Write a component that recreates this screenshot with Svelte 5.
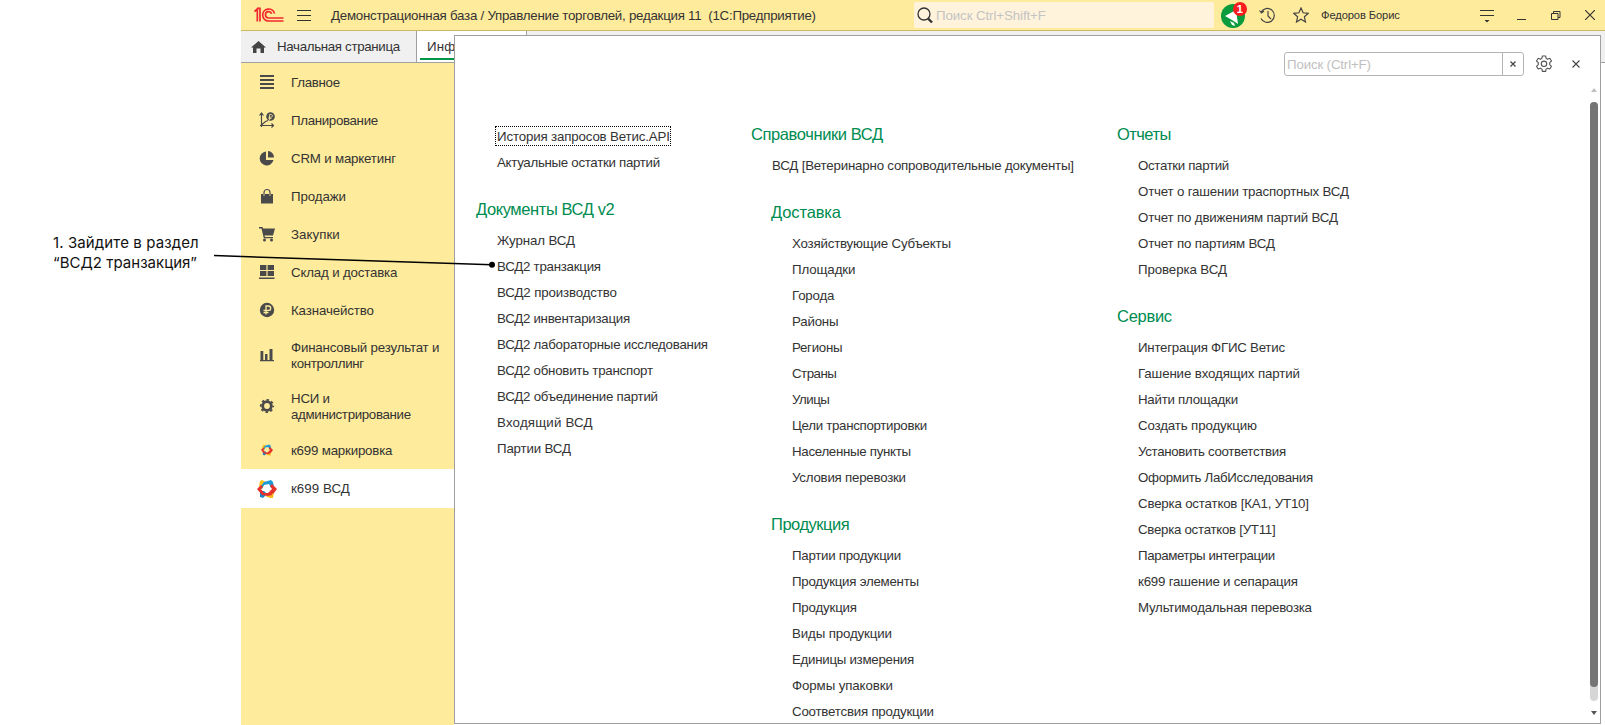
<script>
  // Spreads a label's letters so that it takes exactly the given width.
  function fit(node, width) {
    const chars = node.textContent.length;
    const natural = node.getBoundingClientRect().width;
    node.style.letterSpacing = (width + 0.8 - natural) / chars + 'px';
  }

  const sections = [
    { icon: 'lines', lines: [['Главное', 48]] },
    { icon: 'plan', lines: [['Планирование', 86]] },
    { icon: 'pie', lines: [['CRM и маркетинг', 104]] },
    { icon: 'bag', lines: [['Продажи', 54]] },
    { icon: 'cart', lines: [['Закупки', 48]] },
    { icon: 'store', lines: [['Склад и доставка', 105.5]] },
    { icon: 'ruble', lines: [['Казначейство', 82]] },
    { icon: 'bars', lines: [['Финансовый результат и', 147.5], ['контроллинг', 72]], size: 'tall' },
    { icon: 'gear', lines: [['НСИ и', 38], ['администрирование', 119]], size: 'mid' },
    { icon: 'k-small', lines: [['к699 маркировка', 100.5]] },
    { icon: 'k-big', lines: [['к699 ВСД', 58]], active: true }
  ];

  const columns = [
    {
      name: 'first',
      groups: [
        { items: [['История запросов Ветис.API', 173, true], ['Актуальные остатки партий', 162]] },
        {
          title: ['Документы ВСД v2', 137.5],
          items: [
            ['Журнал ВСД', 77], ['ВСД2 транзакция', 103], ['ВСД2 производство', 119],
            ['ВСД2 инвентаризация', 132], ['ВСД2 лабораторные исследования', 210],
            ['ВСД2 обновить транспорт', 155], ['ВСД2 объединение партий', 160],
            ['Входящий ВСД', 95], ['Партии ВСД', 73]
          ]
        }
      ]
    },
    {
      name: 'second',
      groups: [
        { title: ['Справочники ВСД', 131], items: [['ВСД [Ветеринарно сопроводительные документы]', 301]] },
        {
          title: ['Доставка', 69],
          nested: true,
          items: [
            ['Хозяйствующие Субъекты', 158], ['Площадки', 62.5], ['Города', 41.5], ['Районы', 45.5],
            ['Регионы', 49.5], ['Страны', 43.5], ['Улицы', 36.5], ['Цели транспортировки', 134],
            ['Населенные пункты', 118], ['Условия перевозки', 113]
          ]
        },
        {
          title: ['Продукция', 77.5],
          nested: true,
          items: [
            ['Партии продукции', 108], ['Продукция элементы', 126], ['Продукция', 64],
            ['Виды продукции', 99], ['Единицы измерения', 121], ['Формы упаковки', 100],
            ['Соответсвия продукции', 141]
          ]
        }
      ]
    },
    {
      name: 'third',
      groups: [
        {
          title: ['Отчеты', 53],
          items: [
            ['Остатки партий', 90], ['Отчет о гашении траспортных ВСД', 210],
            ['Отчет по движениям партий ВСД', 199], ['Отчет по партиям ВСД', 136], ['Проверка ВСД', 88]
          ]
        },
        {
          title: ['Сервис', 54],
          items: [
            ['Интеграция ФГИС Ветис', 146], ['Гашение входящих партий', 161], ['Найти площадки', 99],
            ['Создать продукцию', 118], ['Установить соответствия', 147], ['Оформить ЛабИсследования', 174],
            ['Сверка остатков [КА1, УТ10]', 170], ['Сверка остатков [УТ11]', 136.5],
            ['Параметры интеграции', 136], ['к699 гашение и сепарация', 159], ['Мультимодальная перевозка', 173]
          ]
        }
      ]
    }
  ];
</script>

{#snippet icon(name)}
  {#if name === 'k-small' || name === 'k-big'}
    <svg width={name === 'k-big' ? 20 : 12} height={name === 'k-big' ? 20 : 12} viewBox="0 0 20 20">
      <path d="M3 2l2-1 4 2-2 3-2 4-3-3z" fill="#f9c21c" />
      <path d="M7 3l7-2 2 2 1 5-3 1-2-4-5 1-2 4-2-2z" fill="#1c9ad6" />
      <path d="M3 12l4 0 3 3-4 4-3-1z" fill="#1c86c4" />
      <path d="M14 11l3 2-1 6-3 0-5-2 4-2z" fill="#f9b81c" />
      <path d="M0 10l4-4 2 2-2 2 3 4 5 0 2-1 1 3-4 1-6-1z" fill="#e5322d" />
      <path d="M15 5l5 5-3 4-4 2-2-2 4-4-2-3z" fill="#e5322d" />
    </svg>
  {:else}
    <svg width="16" height="16" viewBox="0 0 16 16" fill="#4a4a4a">
      {#if name === 'lines'}
        <path d="M1 1h14v2H1zM1 5h14v2H1zM1 9h14v2H1zM1 13h14v2H1z" />
      {:else if name === 'plan'}
        <path d="M2.500 15V1.500M.5 3.500l2-2.500 2 2.500M1 13.500h13.500M12.500 11.500l2 2-2 2M2.500 13l4-3.500 2.500-1" fill="none" stroke="#4a4a4a" stroke-width="1.200" />
        <circle cx="11.500" cy="4.500" r="4.300" />
        <path d="M10.500 8V2.500h1.700a1.300 1.300 0 0 1 0 2.600H9.500M9.500 6.500h3" fill="none" stroke="#ffeb9c" stroke-width=".8" />
      {:else if name === 'pie'}
        <path d="M7 1.500a7 7 0 1 0 7.500 8.500H7z" /><path d="M9 1a6.500 6.500 0 0 1 6 6.500H9z" />
      {:else if name === 'bag'}
        <path d="M2 6h12v9.500H2z" /><path d="M5 8V4.500a3 3 0 0 1 6 0V8" fill="none" stroke="#4a4a4a" stroke-width="1.200" /><path d="M5 6v2M11 6v2" stroke="#ffeb9c" stroke-width=".8" />
      {:else if name === 'cart'}
        <path d="M0 1h3.500l.7 1.500H16l-2 7H5.500l.5 1.500h8v1.300H4.800L2.500 2.500H0z" /><circle cx="5.500" cy="14" r="1.500" /><circle cx="12.500" cy="14" r="1.500" />
      {:else if name === 'store'}
        <path d="M1 1h6.400v5H1zM8.600 1H15v5H8.600zM1 7h6.400v5H1zM8.600 7H15v5H8.600zM0 13.500h15.500v1.500H0z" />
      {:else if name === 'ruble'}
        <circle cx="8" cy="8" r="7.200" />
        <path d="M7 12.500V4h2.500a2.200 2.200 0 0 1 0 4.400H4.500M4.500 10.500h5" fill="none" stroke="#ffeb9c" stroke-width="1.300" />
      {:else if name === 'bars'}
        <path d="M1.500 4h2.800v9H1.500zM6 7h2.500v6H6zM10.500 2h3v11h-3zM1 13h14v1.300H1z" />
      {:else if name === 'gear'}
        <circle cx="8" cy="8" r="4.300" fill="none" stroke="#4a4a4a" stroke-width="2.800" />
        <circle cx="8" cy="8" r="6.200" fill="none" stroke="#4a4a4a" stroke-width="1.800" stroke-dasharray="2.500 2.370" stroke-dashoffset="1.250" />
      {/if}
    </svg>
  {/if}
{/snippet}

<div class="page">
  <aside class="note">
    <div><span use:fit={145}>1. Зайдите в раздел</span></div>
    <div><span use:fit={143}>“ВСД2 транзакция”</span></div>
  </aside>

  <div class="app">
    <header class="titlebar">
      <svg class="logo" width="30" height="16" viewBox="0 0 30 16" fill="none" stroke="#f0282d" stroke-width="1.700">
        <path d="M.5 4.500L3.300 2v12.500M3 1.300h3v13.200" />
        <path d="M20.500 6.500a6 6 0 1 0-6 7.500H29.500M17.700 6.800a3.200 3.200 0 1 0-3.200 4.200H29.500" />
      </svg>
      <svg class="burger" width="14" height="14" viewBox="0 0 14 14"><path d="M0 1.500h14M0 6.500h14M0 11.500h14" stroke="#333" /></svg>
      <span class="title"><span use:fit={484}>Демонстрационная база / Управление торговлей, редакция 11&nbsp; (1С:Предприятие)</span></span>
      <div class="global-search">
        <svg width="17" height="17" viewBox="0 0 17 17" fill="none" stroke="#333"><circle cx="7" cy="7" r="6" stroke-width="1.300" /><path d="M11 11.500l4 4" stroke-width="2.400" /></svg>
        <span use:fit={109}>Поиск Ctrl+Shift+F</span>
      </div>
      <svg class="bell" width="28" height="28" viewBox="0 0 28 28">
        <circle cx="12" cy="15" r="12" fill="#0a9b3c" />
        <path d="M4 15l11-6 2 14-6-4z" fill="#fff" /><path d="M9 20l2 4 3 1-1-3z" fill="#fff" />
        <circle cx="19" cy="8" r="7" fill="#f91d1d" />
        <text x="18.700" y="12" text-anchor="middle" fill="#fff">1</text>
      </svg>
      <svg class="clock" width="17" height="17" viewBox="0 0 17 17" fill="none" stroke="#444" stroke-width="1.200"><path d="M2.200 5a7 7 0 1 1-.2 6.500M.5 3.500l2 2.500 2.500-2M9 4v5l3 3" /></svg>
      <svg class="star" width="16" height="16" viewBox="0 0 16 16" fill="none" stroke="#444" stroke-width="1.200"><path d="M8 1l2.100 4.800 5.200.5-3.900 3.500 1.100 5.200L8 12.300 3.500 15l1.100-5.200L.7 6.300l5.200-.5z" /></svg>
      <span class="user"><span use:fit={78}>Федоров Борис</span></span>
      <svg class="filter" width="14" height="14" viewBox="0 0 14 14"><path d="M0 1.500h14M0 6.500h14" stroke="#333" /><path d="M4.500 11h5L7 13.500z" fill="#333" /></svg>
      <svg class="minimize" width="9" height="12" viewBox="0 0 9 12"><path d="M0 10.500h9" stroke="#333" /></svg>
      <svg class="restore" width="10" height="10" viewBox="0 0 10 10" fill="none" stroke="#333"><path d="M.5 2.500h6.500v6H.5zM2.500 2.500v-2h6.500v6H7" /></svg>
      <svg class="close" width="10" height="10" viewBox="0 0 10 10"><path d="M0 0l10 10M10 0L0 10" stroke="#333" stroke-width="1.200" /></svg>
    </header>

    <nav class="tabs">
      <div class="tab home">
        <svg width="15" height="12" viewBox="0 0 15 12"><path d="M7.500 0L15 6.500h-2V12H9.500V7.500h-4V12H2V6.500H0z" fill="#444" /></svg>
        <span use:fit={122}>Начальная страница</span>
      </div>
      <div class="tab current"><span>Информация</span></div>
    </nav>

    <div class="body">
      <nav class="sections">
        {#each sections as s}
          <div class="section {s.size ?? ''}" class:active={s.active}>
            <div class="pic">{@render icon(s.icon)}</div>
            <div class="label">
              {#each s.lines as line}
                <div class="line"><span use:fit={line[1]}>{line[0]}</span></div>
              {/each}
            </div>
          </div>
        {/each}
      </nav>
    </div>
  </div>

  <div class="panel">
    <div class="tools">
      <div class="search">
        <span class="hint"><span use:fit={83}>Поиск (Ctrl+F)</span></span>
        <span class="clear"><svg width="6" height="6" viewBox="0 0 6 6"><path d="M.5.5l5 5M5.500.5l-5 5" stroke="#444" stroke-width="1.200" /></svg></span>
      </div>
      <svg class="cog" width="18" height="18" viewBox="0 0 18 18" fill="none" stroke="#555" stroke-width="1.100" stroke-linejoin="round">
        <path d="M7.300 1h3.400l.4 2.300 1.500.9 2.200-.9L16.500 6l-1.800 1.600v2l1.800 1.700-1.700 2.700-2.200-.8-1.500.9-.4 2.300H7.300l-.4-2.300-1.500-.9-2.200.8-1.700-2.700 1.800-1.700v-2L1.500 6l1.700-2.700 2.200.9 1.500-.9z" />
        <circle cx="9" cy="8.800" r="2.700" />
      </svg>
      <svg class="x" width="8" height="8" viewBox="0 0 8 8"><path d="M.5.5l7 7M7.500.5l-7 7" stroke="#444" stroke-width="1.100" /></svg>
    </div>
    <div class="content">
      {#each columns as col}
        <div class="column {col.name}">
          {#each col.groups as group}
            <div class="group" class:nested={group.nested}>
              {#if group.title}
                <div class="heading"><span use:fit={group.title[1]}>{group.title[0]}</span></div>
              {/if}
              {#each group.items as item}
                <div class="item" class:focused={item[2]}><span use:fit={item[1]}>{item[0]}</span></div>
              {/each}
            </div>
          {/each}
        </div>
      {/each}
      <div class="scroll">
        <svg width="6" height="4" viewBox="0 0 6 4"><path d="M3 0l3 4H0z" fill="#c0c0c0" /></svg>
        <div class="track"><div class="thumb"></div></div>
        <svg width="6" height="4" viewBox="0 0 6 4"><path d="M3 4l3-4H0z" fill="#555" /></svg>
      </div>
    </div>
  </div>

  <svg class="pointer" width="285" height="20" viewBox="0 0 285 20">
    <path d="M0 5.600L278 14.700" stroke="#000" stroke-width="1.500" /><circle cx="278" cy="14.700" r="3" />
  </svg>
</div>

<style>
  :global(body) { background: #fff; overflow: hidden; }
  .page {
    position: relative;
    display: flex;
    width: 1605px;
    height: 725px;
    overflow: hidden;
    font: 13.300px/16px "Liberation Sans", Arial, sans-serif;
    color: #333;
    white-space: nowrap;
  }
  svg { display: block; flex: none; }
  .note {
    width: 188px;
    padding: 233px 0 0 53px;
    font: 15px/20px Inter, sans-serif;
    color: #111;
  }
  .app { width: 1364px; display: flex; flex-direction: column; }
  .titlebar {
    display: flex;
    align-items: center;
    height: 30px;
    background: #ffeb9c;
    border-bottom: 1px solid #cdb964;
  }
  .logo { margin-left: 13px; }
  .burger { margin: 2px 0 0 13px; }
  .title { width: 583px; padding: 1px 0 0 20px; box-sizing: border-box; }
  .global-search {
    display: flex;
    align-items: center;
    gap: 2px;
    width: 300px;
    height: 26px;
    margin-left: 20px;
    padding-left: 3px;
    box-sizing: border-box;
    border-radius: 2px;
    background: #fff3dc;
    color: #c3c3c3;
  }
  .global-search span { padding-top: 1px; }
  .bell { margin-left: 7px; }
  .bell text { font: bold 11px "Liberation Sans", Arial, sans-serif; }
  .clock { margin-left: 10px; }
  .star { margin-left: 17px; }
  .user { width: 159px; margin-left: 12px; font-size: 11.200px; }
  .filter { margin-top: 2px; }
  .minimize { margin: 0 0 0 23px; }
  .restore { margin: 1px 0 0 25px; }
  .close { margin-left: 24px; }
  .tabs {
    display: flex;
    height: 31px;
    background: #f0f0f0;
    border-bottom: 1px solid #a0a0a0;
  }
  .tab { display: flex; align-items: center; box-sizing: border-box; border-right: 1px solid #a0a0a0; }
  .home { width: 176px; padding-left: 10px; gap: 11px; }
  .home span { padding-top: 1px; }
  .current { width: 110px; padding: 1px 0 0 10px; background: linear-gradient(#009646, #009646) 3px 27px / 104px 2px no-repeat #fff; letter-spacing: .2px; }
  .body { flex: 1; display: flex; }
  .sections { width: 213px; background: #ffeb9c; }
  .section { display: flex; align-items: center; height: 38px; }
  .section.tall { height: 52px; }
  .section.mid { height: 50px; }
  .section.active { height: 39px; background: #fff; }
  .pic { width: 50px; padding-left: 1px; box-sizing: border-box; display: flex; justify-content: center; }
  .pic svg { margin-left: 1px; }
  .label { padding-top: 1px; }
  .active .label { padding-top: 0; }
  .line { height: 16px; }
  .panel {
    position: absolute;
    left: 454px;
    top: 35px;
    width: 1145px;
    height: 687px;
    border: 1px solid #a0a0a0;
    background: #fff;
    overflow: hidden;
  }
  .tools { display: flex; align-items: center; justify-content: flex-end; height: 24px; padding: 16px 20px 0 0; }
  .search {
    display: flex;
    width: 240px;
    height: 24px;
    box-sizing: border-box;
    border: 1px solid #b4b4b4;
    border-radius: 3px;
  }
  .hint { flex: 1; padding-left: 2px; line-height: 24px; color: #bfbfbf; }
  .clear { display: flex; align-items: center; justify-content: center; width: 20px; border-left: 1px solid #b4b4b4; }
  .cog { margin-left: 11px; }
  .x { margin-left: 19px; }
  .content { display: flex; height: 647px; }
  .column { padding: 45px 0 0 21px; box-sizing: border-box; }
  .first { width: 275px; padding-top: 47px; }
  .second { width: 366px; }
  .third { width: 452px; }
  .nested { padding-left: 20px; }
  .group + .group { margin-top: 21px; }
  .heading { height: 26px; margin-bottom: 5px; font-size: 16.500px; line-height: 27px; color: #008c50; }
  .item { height: 26px; line-height: 28px; padding-left: 21px; }
  .focused span { display: inline-block; height: 18px; margin-left: -1px; padding-left: 1px; line-height: 20px; outline: 1px dotted #000; }
  .scroll { display: flex; flex-direction: column; align-items: center; width: 8px; margin-left: 42px; padding-top: 12px; box-sizing: border-box; }
  .track { width: 8px; height: 599px; margin: 10px 0 10px; border-radius: 4px; background: #d6d6d6; }
  .thumb { height: 585px; border-radius: 4px; background: #757575; }
  .pointer { position: absolute; left: 214px; top: 250px; }
</style>
